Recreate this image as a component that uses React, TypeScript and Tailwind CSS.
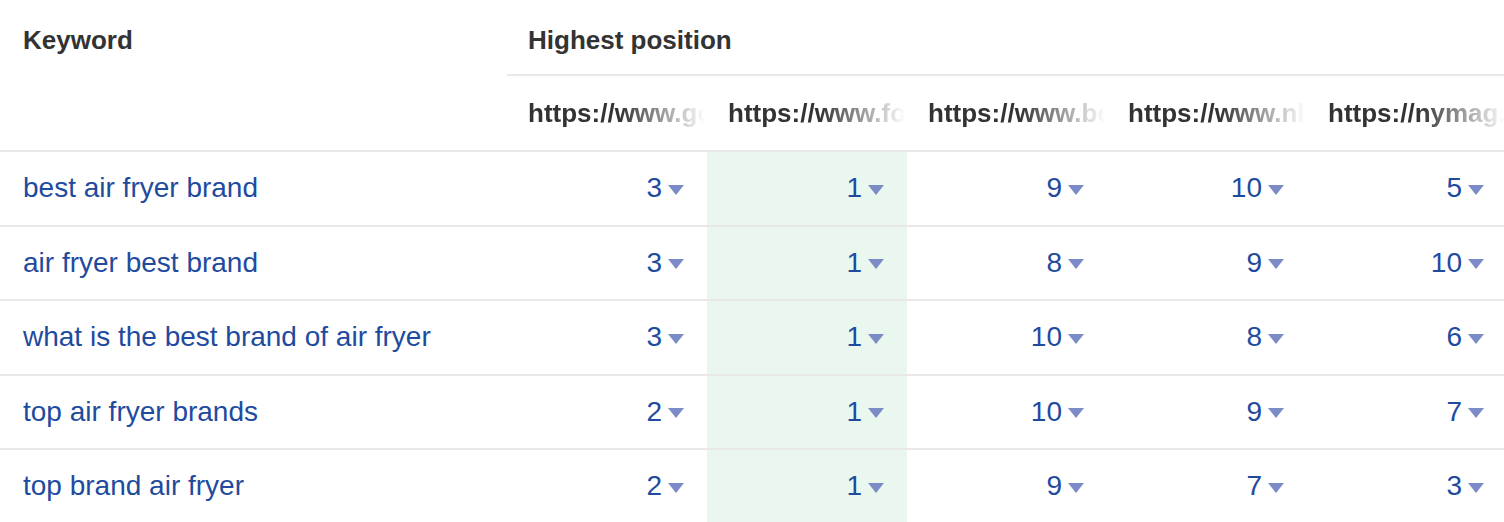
import React from 'react';

const urls = [
  'https://www.goodhousekeeping.com/appliances/',
  'https://www.foodnetwork.com/how-to/packages/',
  'https://www.bestproducts.com/appliances/',
  'https://www.nbcnews.com/select/shopping/',
  'https://nymag.com/strategist/article/',
];

const rows: { keyword: string; positions: number[] }[] = [
  { keyword: 'best air fryer brand', positions: [3, 1, 9, 10, 5] },
  { keyword: 'air fryer best brand', positions: [3, 1, 8, 9, 10] },
  { keyword: 'what is the best brand of air fryer', positions: [3, 1, 10, 8, 6] },
  { keyword: 'top air fryer brands', positions: [2, 1, 10, 9, 7] },
  { keyword: 'top brand air fryer', positions: [2, 1, 9, 7, 3] },
];

function Caret() {
  return (
    <svg width="16" height="10" viewBox="0 0 16 10" className="ml-[6px] mt-[3px]">
      <polygon points="0,0 16,0 8,10" fill="#7b8bc5" />
    </svg>
  );
}

export default function App() {
  return (
    <div
      className="w-[1504px] h-[522px] overflow-hidden bg-white"
      style={{ fontFamily: '"Liberation Sans", Arial, sans-serif' }}
    >
      <div className="grid grid-cols-[507px_repeat(5,200px)] w-[1507px]">
        {/* Header */}
        <div className="row-span-2 h-[152px] border-b-2 border-[#e9e9e9] pl-[23px] pt-[21px] text-[26px] font-bold text-[#333]">
          Keyword
        </div>
        <div className="col-span-5 h-[76px] border-b-2 border-[#e9e9e9] pl-[21px] pt-[21px] text-[26px] font-bold text-[#333]">
          Highest position
        </div>
        {urls.map((u) => (
          <div
            key={u}
            className="h-[76px] border-b-2 border-[#e9e9e9] pl-[21px] flex items-center overflow-hidden"
          >
            <span className="block w-[177px] overflow-hidden whitespace-nowrap text-[26px] font-bold text-[#333] [mask-image:linear-gradient(to_right,#000_52%,transparent_100%)]">
              {u}
            </span>
          </div>
        ))}

        {/* Rows */}
        {rows.map((r) => (
          <React.Fragment key={r.keyword}>
            <div className="h-[74.5px] border-b-2 border-[#e9e9e9] pl-[23px] flex items-center text-[28px] text-[#1f4b9e]">
              {r.keyword}
            </div>
            {r.positions.map((p, i) => (
              <div
                key={i}
                className={`h-[74.5px] border-b-2 border-[#e9e9e9] pr-[23px] flex items-center justify-end text-[28px] text-[#1f4b9e] ${
                  i === 1 ? 'bg-[#eaf7ef]' : ''
                }`}
              >
                {p}
                <Caret />
              </div>
            ))}
          </React.Fragment>
        ))}
      </div>
    </div>
  );
}
